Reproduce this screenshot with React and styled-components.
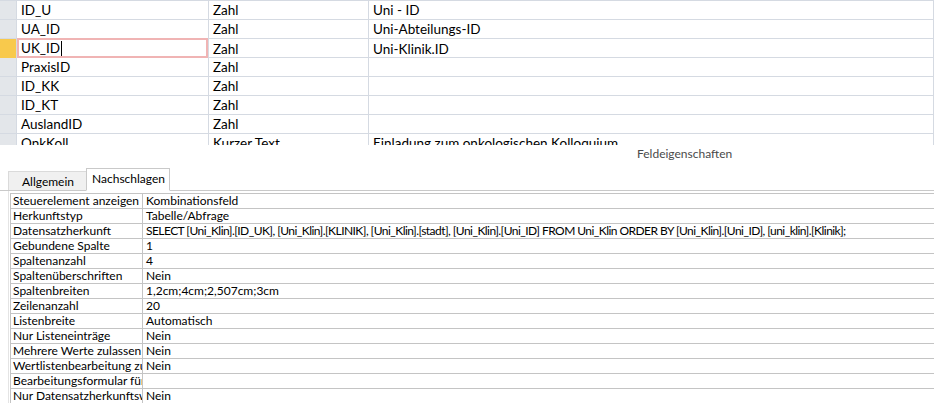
import React from 'react'
import styled, { createGlobalStyle } from 'styled-components'

const GlobalStyle = createGlobalStyle`
  html, body {
    margin: 0;
    padding: 0;
    background: #ffffff;
  }
  body {
    font-family: "Segoe UI", Lato, "Noto Sans", sans-serif;
    color: #000;
  }
`

const Page = styled.div`
  width: 934px;
  height: 403px;
  overflow: hidden;
  background: #fff;
`

const FieldGrid = styled.div`
  height: 144px;
  overflow: hidden;
  border-top: 1px solid #d5dae2;
`

const FieldRow = styled.div`
  display: grid;
  grid-template-columns: 17px 192px 160px 1fr;
  height: 19px;
  box-sizing: border-box;
  border-bottom: 1px solid #d5dae2;
  font-size: 13.5px;
`

const Selector = styled.div`
  background: ${p => (p.$active ? '#f8c94c' : '#e3e6ea')};
  border-right: 1px solid #d5dae2;
`

const FieldCell = styled.div`
  display: flex;
  align-items: center;
  padding-left: 4px;
  border-right: 1px solid #d5dae2;
  white-space: nowrap;
  overflow: hidden;
  line-height: 18px;
  ${p =>
    p.$focused &&
    `
    box-shadow: inset 0 0 0 2px #f0b4b4;
    margin-top: -1px;
    height: 20px;
  `}
`

const Caret = styled.span`
  display: inline-block;
  width: 1px;
  height: 15px;
  background: #000;
  margin-left: 1px;
`

const Caption = styled.div`
  height: 23px;
  font-size: 12px;
  color: #4a4a4a;
  padding-left: 637px;
  line-height: 18px;
`

const TabStrip = styled.div`
  display: flex;
  align-items: flex-end;
  padding-left: 8px;
  height: 22px;
  border-bottom: 1px solid #c9c9c9;
`

const Tab = styled.div`
  box-sizing: border-box;
  font-size: 12px;
  line-height: 17px;
  border: 1px solid ${p => (p.$active ? '#c9c9c9' : '#dadada')};
  background: ${p => (p.$active ? '#ffffff' : '#f0f0f0')};
  height: ${p => (p.$active ? '23px' : '19px')};
  margin-bottom: ${p => (p.$active ? '-1px' : '0')};
  border-bottom: ${p => (p.$active ? '1px solid #fff' : 'none')};
  padding: ${p => (p.$active ? '1px 4px 0 5px' : '1px 12px 0 13px')};
  margin-left: ${p => (p.$active ? '-1px' : '0')};
`

const Panel = styled.div`
  margin-left: 8px;
  padding: 2px 0 0 1px;
  border-left: 1px solid #e4e4e4;
`

const PropGrid = styled.div`
  border-top: 1px solid #c4c4c4;
  border-left: 1px solid #c4c4c4;
`

const PropRow = styled.div`
  display: grid;
  grid-template-columns: 132px 1fr;
  height: 15px;
  box-sizing: border-box;
  border-bottom: 1px solid #c4c4c4;
  font-size: 12px;
  line-height: 14px;
`

const PropLabel = styled.div`
  padding-left: 2px;
  border-right: 1px solid #c4c4c4;
  white-space: nowrap;
  overflow: hidden;
`

const PropValue = styled.div`
  padding-left: 3px;
  white-space: nowrap;
  overflow: hidden;
  letter-spacing: ${p => (p.$dense ? '-0.55px' : '0')};
`

const fields = [
  ['ID_U', 'Zahl', 'Uni - ID'],
  ['UA_ID', 'Zahl', 'Uni-Abteilungs-ID'],
  ['UK_ID', 'Zahl', 'Uni-Klinik.ID'],
  ['PraxisID', 'Zahl', ''],
  ['ID_KK', 'Zahl', ''],
  ['ID_KT', 'Zahl', ''],
  ['AuslandID', 'Zahl', ''],
  ['OnkKoll', 'Kurzer Text', 'Einladung zum onkologischen Kolloquium'],
]

const props = [
  ['Steuerelement anzeigen', 'Kombinationsfeld'],
  ['Herkunftstyp', 'Tabelle/Abfrage'],
  [
    'Datensatzherkunft',
    'SELECT [Uni_Klin].[ID_UK], [Uni_Klin].[KLINIK], [Uni_Klin].[stadt], [Uni_Klin].[Uni_ID] FROM Uni_Klin ORDER BY [Uni_Klin].[Uni_ID], [uni_klin].[Klinik];',
    true,
  ],
  ['Gebundene Spalte', '1'],
  ['Spaltenanzahl', '4'],
  ['Spaltenüberschriften', 'Nein'],
  ['Spaltenbreiten', '1,2cm;4cm;2,507cm;3cm'],
  ['Zeilenanzahl', '20'],
  ['Listenbreite', 'Automatisch'],
  ['Nur Listeneinträge', 'Nein'],
  ['Mehrere Werte zulassen', 'Nein'],
  ['Wertlistenbearbeitung zulassen', 'Nein'],
  ['Bearbeitungsformular für Listenelemente', ''],
  ['Nur Datensatzherkunftswerte anzeigen', 'Nein'],
]

function App() {
  return (
    <>
      <GlobalStyle />
      <Page>
        <FieldGrid>
          {fields.map(([name, type, desc], i) => (
            <FieldRow key={name}>
              <Selector $active={i === 2} />
              <FieldCell $focused={i === 2}>
                {name}
                {i === 2 && <Caret />}
              </FieldCell>
              <FieldCell>{type}</FieldCell>
              <FieldCell>{desc}</FieldCell>
            </FieldRow>
          ))}
        </FieldGrid>
        <Caption>Feldeigenschaften</Caption>
        <TabStrip>
          <Tab>Allgemein</Tab>
          <Tab $active>Nachschlagen</Tab>
        </TabStrip>
        <Panel>
          <PropGrid>
            {props.map(([label, value, dense]) => (
              <PropRow key={label}>
                <PropLabel>{label}</PropLabel>
                <PropValue $dense={dense}>{value}</PropValue>
              </PropRow>
            ))}
          </PropGrid>
        </Panel>
      </Page>
    </>
  )
}

export default App
